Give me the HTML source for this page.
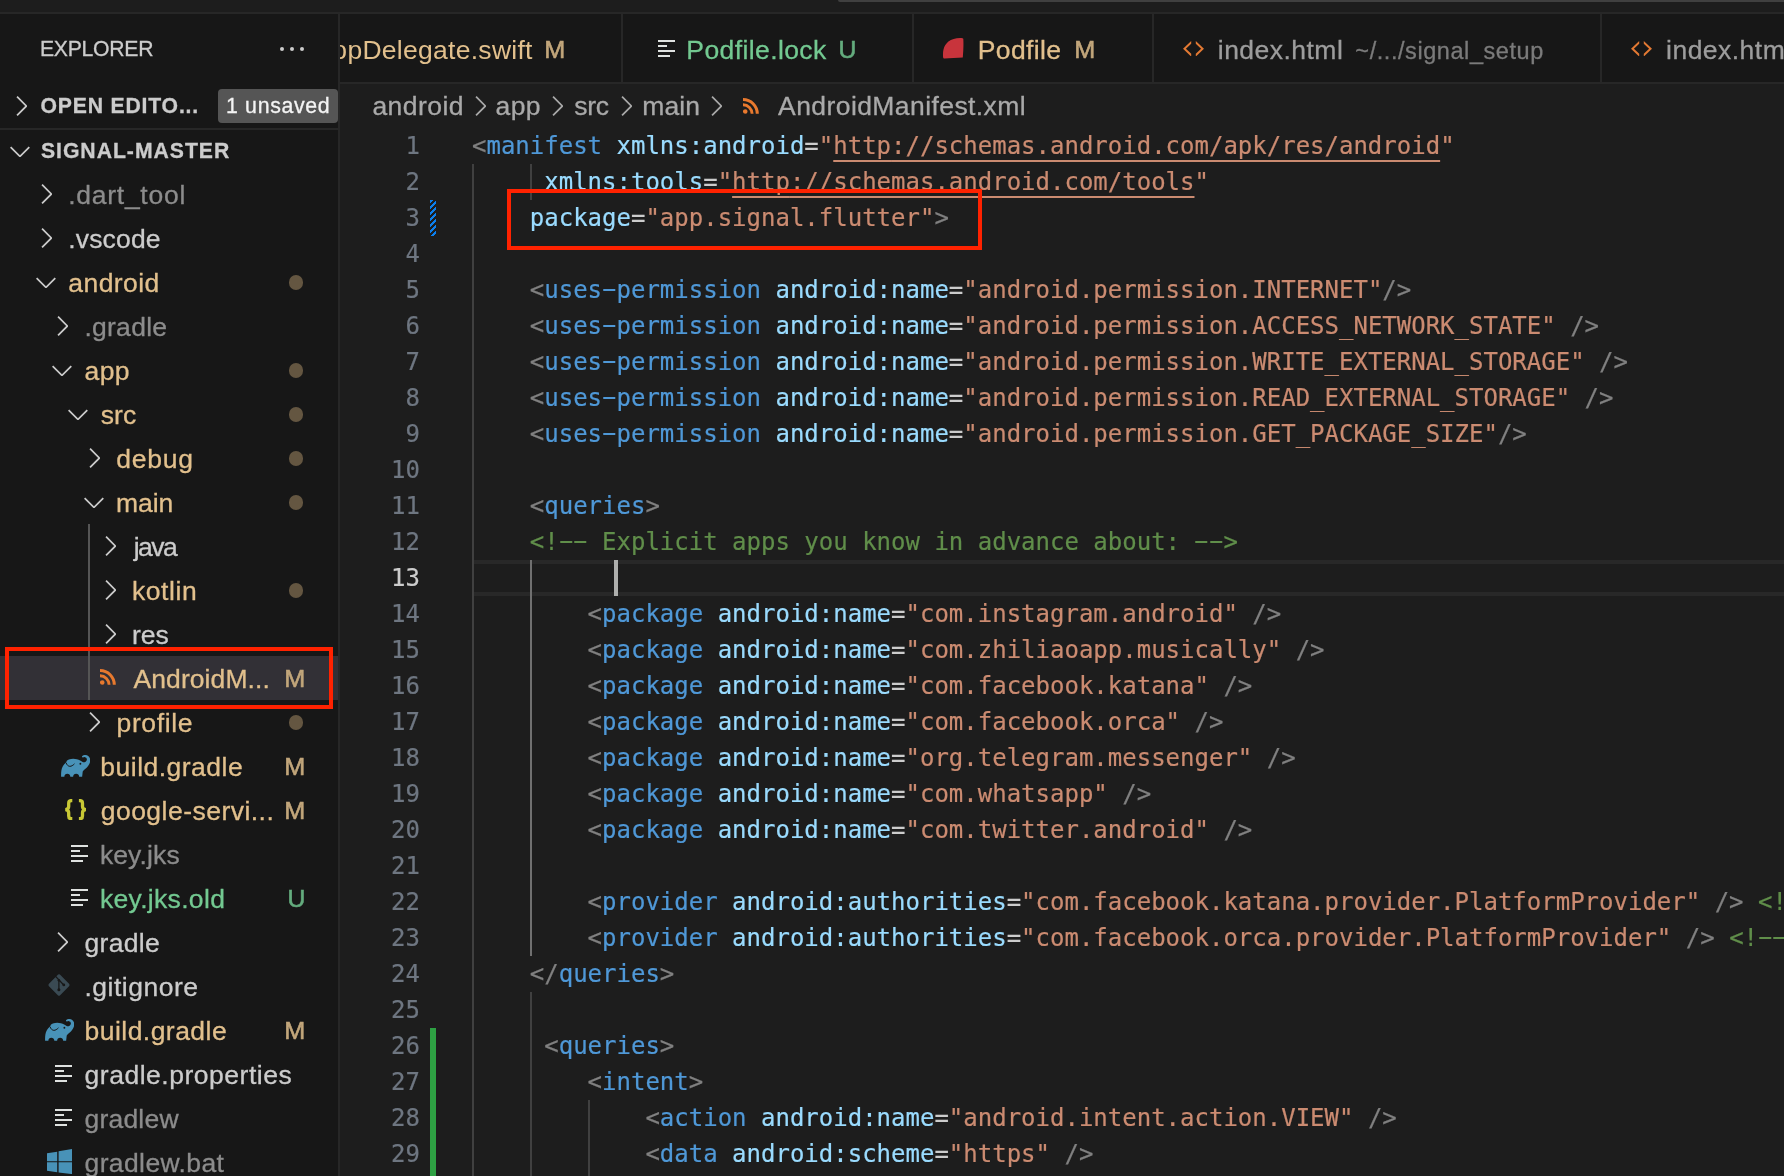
<!DOCTYPE html><html><head><meta charset="utf-8"><title>AndroidManifest.xml</title><style>html,body{margin:0;padding:0;background:#1d1d1d;}body{width:1784px;height:1176px;position:relative;overflow:hidden;}</style></head><body><div style="position:absolute;left:0px;top:0px;width:1784px;height:12px;background:#1d1d1d;"></div>
<div style="position:absolute;left:838px;top:0px;width:946px;height:2px;background:#404040;border-bottom-left-radius:3px;"></div>
<div style="position:absolute;left:0px;top:12px;width:1784px;height:2px;background:#272727;"></div>
<div style="position:absolute;left:0px;top:14px;width:338px;height:1162px;background:#171717;"></div>
<div style="position:absolute;left:338px;top:14px;width:2px;height:1162px;background:#272727;"></div>
<div style="position:absolute;left:340px;top:14px;width:1444px;height:68px;background:#171717;"></div>
<div style="position:absolute;left:340px;top:82px;width:1444px;height:2px;background:#272727;"></div>
<div style="position:absolute;left:340px;top:84px;width:1444px;height:1092px;background:#1d1d1d;"></div>
<div style="position:absolute;left:621px;top:14px;width:2px;height:68px;background:#272727;"></div>
<div style="position:absolute;left:912px;top:14px;width:2px;height:68px;background:#272727;"></div>
<div style="position:absolute;left:1152px;top:14px;width:2px;height:68px;background:#272727;"></div>
<div style="position:absolute;left:1600px;top:14px;width:2px;height:68px;background:#272727;"></div>
<div style="position:absolute;left:280.0px;top:47px;width:4.1px;height:4.1px;border-radius:50%;background:#cccccc"></div>
<div style="position:absolute;left:290.1px;top:47px;width:4.1px;height:4.1px;border-radius:50%;background:#cccccc"></div>
<div style="position:absolute;left:300.1px;top:47px;width:4.1px;height:4.1px;border-radius:50%;background:#cccccc"></div>
<svg style="position:absolute;left:4.5px;top:90px" width="32" height="32" viewBox="0 0 16 16"><path fill="#cccccc" d="M10.072 8.024L5.715 3.667l.618-.62L11 7.716v.618L6.333 13l-.618-.619 4.357-4.357z"/></svg>
<div style="position:absolute;left:218px;top:89px;width:120px;height:34px;background:#555555;border-radius:4px;"></div>
<div style="position:absolute;left:0px;top:128px;width:338px;height:2px;background:#272727;"></div>
<svg style="position:absolute;left:4px;top:134.5px" width="32" height="32" viewBox="0 0 16 16"><path fill="#cccccc" d="M7.976 10.072l4.357-4.357.62.618L8.284 11h-.618L3 6.333l.619-.618 4.357 4.357z"/></svg>
<div style="position:absolute;left:0px;top:656px;width:338px;height:44px;background:#323036;"></div>
<div style="position:absolute;left:88px;top:524px;width:2px;height:176px;background:#555555;"></div>
<svg style="position:absolute;left:30px;top:178px" width="32" height="32" viewBox="0 0 16 16"><path fill="#cccccc" d="M10.072 8.024L5.715 3.667l.618-.62L11 7.716v.618L6.333 13l-.618-.619 4.357-4.357z"/></svg>
<svg style="position:absolute;left:30px;top:222px" width="32" height="32" viewBox="0 0 16 16"><path fill="#cccccc" d="M10.072 8.024L5.715 3.667l.618-.62L11 7.716v.618L6.333 13l-.618-.619 4.357-4.357z"/></svg>
<svg style="position:absolute;left:30px;top:266px" width="32" height="32" viewBox="0 0 16 16"><path fill="#cccccc" d="M7.976 10.072l4.357-4.357.62.618L8.284 11h-.618L3 6.333l.619-.618 4.357 4.357z"/></svg>
<div style="position:absolute;left:288.5px;top:274.8px;width:14.8px;height:14.8px;border-radius:50%;background:#645641"></div>
<svg style="position:absolute;left:46px;top:310px" width="32" height="32" viewBox="0 0 16 16"><path fill="#cccccc" d="M10.072 8.024L5.715 3.667l.618-.62L11 7.716v.618L6.333 13l-.618-.619 4.357-4.357z"/></svg>
<svg style="position:absolute;left:46px;top:354px" width="32" height="32" viewBox="0 0 16 16"><path fill="#cccccc" d="M7.976 10.072l4.357-4.357.62.618L8.284 11h-.618L3 6.333l.619-.618 4.357 4.357z"/></svg>
<div style="position:absolute;left:288.5px;top:362.8px;width:14.8px;height:14.8px;border-radius:50%;background:#645641"></div>
<svg style="position:absolute;left:62px;top:398px" width="32" height="32" viewBox="0 0 16 16"><path fill="#cccccc" d="M7.976 10.072l4.357-4.357.62.618L8.284 11h-.618L3 6.333l.619-.618 4.357 4.357z"/></svg>
<div style="position:absolute;left:288.5px;top:406.8px;width:14.8px;height:14.8px;border-radius:50%;background:#645641"></div>
<svg style="position:absolute;left:78px;top:442px" width="32" height="32" viewBox="0 0 16 16"><path fill="#cccccc" d="M10.072 8.024L5.715 3.667l.618-.62L11 7.716v.618L6.333 13l-.618-.619 4.357-4.357z"/></svg>
<div style="position:absolute;left:288.5px;top:450.8px;width:14.8px;height:14.8px;border-radius:50%;background:#645641"></div>
<svg style="position:absolute;left:78px;top:486px" width="32" height="32" viewBox="0 0 16 16"><path fill="#cccccc" d="M7.976 10.072l4.357-4.357.62.618L8.284 11h-.618L3 6.333l.619-.618 4.357 4.357z"/></svg>
<div style="position:absolute;left:288.5px;top:494.8px;width:14.8px;height:14.8px;border-radius:50%;background:#645641"></div>
<svg style="position:absolute;left:94px;top:530px" width="32" height="32" viewBox="0 0 16 16"><path fill="#cccccc" d="M10.072 8.024L5.715 3.667l.618-.62L11 7.716v.618L6.333 13l-.618-.619 4.357-4.357z"/></svg>
<svg style="position:absolute;left:94px;top:574px" width="32" height="32" viewBox="0 0 16 16"><path fill="#cccccc" d="M10.072 8.024L5.715 3.667l.618-.62L11 7.716v.618L6.333 13l-.618-.619 4.357-4.357z"/></svg>
<div style="position:absolute;left:288.5px;top:582.8000000000001px;width:14.8px;height:14.8px;border-radius:50%;background:#645641"></div>
<svg style="position:absolute;left:94px;top:618px" width="32" height="32" viewBox="0 0 16 16"><path fill="#cccccc" d="M10.072 8.024L5.715 3.667l.618-.62L11 7.716v.618L6.333 13l-.618-.619 4.357-4.357z"/></svg>
<svg style="position:absolute;left:99.7px;top:669.45px" width="16" height="16" viewBox="0 0 16 16"><circle cx="2.25" cy="13.45" r="2.3" fill="#e8792e"/><path d="M0 6.75 A9.1 9.1 0 0 1 9.1 15.85" fill="none" stroke="#e8792e" stroke-width="2.9"/><path d="M0 1.55 A14.3 14.3 0 0 1 14.3 15.85" fill="none" stroke="#e8792e" stroke-width="3.05"/></svg>
<svg style="position:absolute;left:78px;top:706px" width="32" height="32" viewBox="0 0 16 16"><path fill="#cccccc" d="M10.072 8.024L5.715 3.667l.618-.62L11 7.716v.618L6.333 13l-.618-.619 4.357-4.357z"/></svg>
<div style="position:absolute;left:288.5px;top:714.8000000000001px;width:14.8px;height:14.8px;border-radius:50%;background:#645641"></div>
<svg style="position:absolute;left:60.8px;top:754.8px" width="29.5" height="22.3" viewBox="0 0 30 23" preserveAspectRatio="none"><path fill="#4892b8" d="M0.1 22.4 C0 18 0.3 14.6 1.6 12.1 C2.8 9.9 4.2 8.4 5.6 7.3 C5.3 6.2 6.4 5.3 8 4.6 C10.5 3.6 13.6 3.5 16.2 4.3 C18.6 5 20.6 6 22 7.2 C22.8 7.7 23.8 7.6 24.6 7.1 C25.7 6.4 26.4 5.4 26.3 4.4 C26.2 3 25.4 2.3 24.3 2.2 C23.5 2.1 22.8 2.3 22.3 2.7 C21.6 2.5 21.2 2 21.4 1.4 C22 0.5 23.4 0 25 0 C27 0 28.7 1.3 29.4 3.4 C30 5.4 29.8 7.2 28.8 9.2 C27.7 11.4 26 13.2 24.2 14.6 C23.2 15.4 22.4 16.2 22.1 17 L21.5 22.4 L18.5 22.4 C18.4 20.4 17.2 19.3 15.4 19.3 C13.6 19.3 12.4 20.4 12.3 22.4 L9.5 22.4 C9.4 20.4 8.2 19.3 6.4 19.3 C4.6 19.3 3.5 20.4 3.4 22.4 Z"/><path d="M5.3 8.4 C6 10.4 7.4 11.6 9 11.7 C10.6 11.7 12 10.8 13.4 9.4" fill="none" stroke="#171717" stroke-width="1" stroke-linecap="round"/><circle cx="19.7" cy="9" r="0.95" fill="#171717"/></svg>
<svg style="position:absolute;left:65px;top:798.8px" width="22" height="21.3" viewBox="0 0 22 21.4" preserveAspectRatio="none"><path transform="translate(0 0)" fill="none" stroke="#c8c835" stroke-width="3.3" d="M7.3 1.6 L6.2 1.6 C4.4 1.6 3.7 2.6 3.7 4.4 L3.7 7.6 C3.7 9.4 2.9 10.4 0.4 10.7 C2.9 11 3.7 12 3.7 13.8 L3.7 17 C3.7 18.8 4.4 19.8 6.2 19.8 L7.3 19.8"/><path transform="translate(21.2 0) scale(-1 1)" fill="none" stroke="#c8c835" stroke-width="3.3" d="M7.3 1.6 L6.2 1.6 C4.4 1.6 3.7 2.6 3.7 4.4 L3.7 7.6 C3.7 9.4 2.9 10.4 0.4 10.7 C2.9 11 3.7 12 3.7 13.8 L3.7 17 C3.7 18.8 4.4 19.8 6.2 19.8 L7.3 19.8"/></svg>
<div style="position:absolute;left:70.9px;top:845.0px;width:16.7px;height:2.2px;background:#dfe2e0;"></div>
<div style="position:absolute;left:70.9px;top:850.0px;width:9.4px;height:2.2px;background:#dfe2e0;"></div>
<div style="position:absolute;left:70.9px;top:855.0px;width:16.7px;height:2.2px;background:#dfe2e0;"></div>
<div style="position:absolute;left:70.9px;top:860.0px;width:12.3px;height:2.2px;background:#dfe2e0;"></div>
<div style="position:absolute;left:70.9px;top:889.0px;width:16.7px;height:2.2px;background:#dfe2e0;"></div>
<div style="position:absolute;left:70.9px;top:894.0px;width:9.4px;height:2.2px;background:#dfe2e0;"></div>
<div style="position:absolute;left:70.9px;top:899.0px;width:16.7px;height:2.2px;background:#dfe2e0;"></div>
<div style="position:absolute;left:70.9px;top:904.0px;width:12.3px;height:2.2px;background:#dfe2e0;"></div>
<svg style="position:absolute;left:46px;top:926px" width="32" height="32" viewBox="0 0 16 16"><path fill="#cccccc" d="M10.072 8.024L5.715 3.667l.618-.62L11 7.716v.618L6.333 13l-.618-.619 4.357-4.357z"/></svg>
<svg style="position:absolute;left:47.8px;top:974.3px" width="22" height="22" viewBox="0 0 21.6 21.9"><path fill="#3a4a53" d="M10.8 0.2 Q11.3 0.2 11.7 0.6 L21 9.9 Q21.6 10.9 21 11.9 L11.7 21.3 Q10.8 21.9 9.9 21.3 L0.6 11.9 Q0 10.9 0.6 9.9 L9.9 0.6 Q10.3 0.2 10.8 0.2 Z"/><g stroke="#171717" stroke-width="1.25" fill="none"><path d="M10.7 6.3 L10.7 15.5"/><path d="M7.2 2.1 L15.5 10.9"/></g><circle cx="10.7" cy="6.3" r="1.25" fill="#171717"/><circle cx="10.7" cy="15.6" r="1.5" fill="#171717"/><circle cx="15.6" cy="10.9" r="1.4" fill="#171717"/></svg>
<svg style="position:absolute;left:44.6px;top:1018.8px" width="29.5" height="22.3" viewBox="0 0 30 23" preserveAspectRatio="none"><path fill="#4892b8" d="M0.1 22.4 C0 18 0.3 14.6 1.6 12.1 C2.8 9.9 4.2 8.4 5.6 7.3 C5.3 6.2 6.4 5.3 8 4.6 C10.5 3.6 13.6 3.5 16.2 4.3 C18.6 5 20.6 6 22 7.2 C22.8 7.7 23.8 7.6 24.6 7.1 C25.7 6.4 26.4 5.4 26.3 4.4 C26.2 3 25.4 2.3 24.3 2.2 C23.5 2.1 22.8 2.3 22.3 2.7 C21.6 2.5 21.2 2 21.4 1.4 C22 0.5 23.4 0 25 0 C27 0 28.7 1.3 29.4 3.4 C30 5.4 29.8 7.2 28.8 9.2 C27.7 11.4 26 13.2 24.2 14.6 C23.2 15.4 22.4 16.2 22.1 17 L21.5 22.4 L18.5 22.4 C18.4 20.4 17.2 19.3 15.4 19.3 C13.6 19.3 12.4 20.4 12.3 22.4 L9.5 22.4 C9.4 20.4 8.2 19.3 6.4 19.3 C4.6 19.3 3.5 20.4 3.4 22.4 Z"/><path d="M5.3 8.4 C6 10.4 7.4 11.6 9 11.7 C10.6 11.7 12 10.8 13.4 9.4" fill="none" stroke="#171717" stroke-width="1" stroke-linecap="round"/><circle cx="19.7" cy="9" r="0.95" fill="#171717"/></svg>
<div style="position:absolute;left:54.9px;top:1065.0px;width:16.7px;height:2.2px;background:#dfe2e0;"></div>
<div style="position:absolute;left:54.9px;top:1070.0px;width:9.4px;height:2.2px;background:#dfe2e0;"></div>
<div style="position:absolute;left:54.9px;top:1075.0px;width:16.7px;height:2.2px;background:#dfe2e0;"></div>
<div style="position:absolute;left:54.9px;top:1080.0px;width:12.3px;height:2.2px;background:#dfe2e0;"></div>
<div style="position:absolute;left:54.9px;top:1109.0px;width:16.7px;height:2.2px;background:#dfe2e0;"></div>
<div style="position:absolute;left:54.9px;top:1114.0px;width:9.4px;height:2.2px;background:#dfe2e0;"></div>
<div style="position:absolute;left:54.9px;top:1119.0px;width:16.7px;height:2.2px;background:#dfe2e0;"></div>
<div style="position:absolute;left:54.9px;top:1124.0px;width:12.3px;height:2.2px;background:#dfe2e0;"></div>
<svg style="position:absolute;left:47px;top:1148.7px" width="25.2" height="25.2" viewBox="0 0 25.2 25.2"><path fill="#4892b8" d="M0 4.25 L10.2 2.75 L10.2 12.15 L0 12.15 Z M11.6 2.25 L25.2 0 L25.2 12.15 L11.6 12.15 Z M0 13.25 L10.2 13.25 L10.2 23.15 L0 21.65 Z M11.6 13.25 L25.2 13.25 L25.2 25.15 L11.6 23.45 Z"/></svg>
<div style="position:absolute;left:658px;top:40.0px;width:16.7px;height:2.2px;background:#dfe2e0;"></div>
<div style="position:absolute;left:658px;top:45.0px;width:9.4px;height:2.2px;background:#dfe2e0;"></div>
<div style="position:absolute;left:658px;top:50.0px;width:16.7px;height:2.2px;background:#dfe2e0;"></div>
<div style="position:absolute;left:658px;top:55.0px;width:12.3px;height:2.2px;background:#dfe2e0;"></div>
<svg style="position:absolute;left:943.1px;top:38px" width="20.8" height="20.8" viewBox="0 0 20.8 20.8"><path fill="#c8343c" d="M17 0 C18.6 -0.1 19.8 0.1 20.3 0.7 C20.7 6 20.3 14 19.8 19.6 C14 19.7 7 20.2 1.6 20.5 C0.4 20.4 0 19.6 0 18.4 C0 15.5 0 13.5 0.5 11.5 C1.3 8.3 3 5.6 5.4 3.6 C8.4 1.2 12.5 0.2 17 0 Z"/></svg>
<svg style="position:absolute;left:1182.9px;top:40.6px" width="21" height="15.6" viewBox="0 0 21 15.6"><path fill="#e37933" d="M0 7.8 L8.2 0 L8.2 2.8 L2.9 7.8 L8.2 12.8 L8.2 15.6 Z M21 7.8 L12.8 0 L12.8 2.8 L18.1 7.8 L12.8 12.8 L12.8 15.6 Z"/></svg>
<svg style="position:absolute;left:1631.3px;top:40.6px" width="21" height="15.6" viewBox="0 0 21 15.6"><path fill="#e37933" d="M0 7.8 L8.2 0 L8.2 2.8 L2.9 7.8 L8.2 12.8 L8.2 15.6 Z M21 7.8 L12.8 0 L12.8 2.8 L18.1 7.8 L12.8 12.8 L12.8 15.6 Z"/></svg>
<svg style="position:absolute;left:463.77px;top:90.3px" width="32" height="32" viewBox="0 0 16 16"><path fill="#a9a9a9" d="M10.072 8.024L5.715 3.667l.618-.62L11 7.716v.618L6.333 13l-.618-.619 4.357-4.357z"/></svg>
<svg style="position:absolute;left:541.1700000000001px;top:90.3px" width="32" height="32" viewBox="0 0 16 16"><path fill="#a9a9a9" d="M10.072 8.024L5.715 3.667l.618-.62L11 7.716v.618L6.333 13l-.618-.619 4.357-4.357z"/></svg>
<svg style="position:absolute;left:610.37px;top:90.3px" width="32" height="32" viewBox="0 0 16 16"><path fill="#a9a9a9" d="M10.072 8.024L5.715 3.667l.618-.62L11 7.716v.618L6.333 13l-.618-.619 4.357-4.357z"/></svg>
<svg style="position:absolute;left:700.2700000000001px;top:90.3px" width="32" height="32" viewBox="0 0 16 16"><path fill="#a9a9a9" d="M10.072 8.024L5.715 3.667l.618-.62L11 7.716v.618L6.333 13l-.618-.619 4.357-4.357z"/></svg>
<svg style="position:absolute;left:743.4px;top:97.9px" width="16" height="16" viewBox="0 0 16 16"><circle cx="2.25" cy="13.45" r="2.3" fill="#e8792e"/><path d="M0 6.75 A9.1 9.1 0 0 1 9.1 15.85" fill="none" stroke="#e8792e" stroke-width="2.9"/><path d="M0 1.55 A14.3 14.3 0 0 1 14.3 15.85" fill="none" stroke="#e8792e" stroke-width="3.05"/></svg>
<div style="position:absolute;left:474px;top:560px;width:1310px;height:4px;background:#282828;"></div>
<div style="position:absolute;left:474px;top:592px;width:1310px;height:4px;background:#282828;"></div>
<div style="position:absolute;left:472px;top:164px;width:2px;height:1012px;background:#404040;"></div>
<div style="position:absolute;left:530px;top:164px;width:2px;height:36px;background:#404040;"></div>
<div style="position:absolute;left:530px;top:560px;width:2px;height:396px;background:#707070;"></div>
<div style="position:absolute;left:530px;top:992px;width:2px;height:184px;background:#404040;"></div>
<div style="position:absolute;left:588px;top:1100px;width:2px;height:76px;background:#404040;"></div>
<div style="position:absolute;left:614px;top:560px;width:4px;height:36px;background:#aeafad;"></div>
<div style="position:absolute;left:430px;top:200px;width:6.2px;height:36px;background:repeating-linear-gradient(135deg,#0c80ee 0,#0c80ee 2.2px,transparent 2.2px,transparent 4.243px)"></div>
<div style="position:absolute;left:430px;top:1028px;width:6.2px;height:148px;background:#2ea043;"></div><div style="position:absolute;left:0;top:0;width:1784px;height:1176px;will-change:transform"><div id="explorer" style="position:absolute;left:39.94px;top:27.4px;height:44px;line-height:44px;font-family:'Liberation Sans', sans-serif;font-size:21.2px;font-weight:400;color:#cccccc;letter-spacing:-0.254px;white-space:pre;-webkit-text-stroke:0.3px;">EXPLORER</div>
<div id="openeditors" style="position:absolute;left:40.44px;top:84.4px;height:44px;line-height:44px;font-family:'Liberation Sans', sans-serif;font-size:21.2px;font-weight:700;color:#cccccc;letter-spacing:0.817px;white-space:pre;-webkit-text-stroke:0.3px;">OPEN EDITO...</div>
<div id="unsaved" style="position:absolute;left:226.02px;top:89px;height:34px;line-height:34px;font-family:'Liberation Sans', sans-serif;font-size:21.3px;font-weight:400;color:#f4f4f4;letter-spacing:0.669px;white-space:pre;-webkit-text-stroke:0.3px;">1 unsaved</div>
<div id="signal" style="position:absolute;left:40.91px;top:129.4px;height:44px;line-height:44px;font-family:'Liberation Sans', sans-serif;font-size:21.2px;font-weight:700;color:#cccccc;letter-spacing:0.984px;white-space:pre;-webkit-text-stroke:0.3px;">SIGNAL-MASTER</div>
<div id="row0" style="position:absolute;left:68.19px;top:173px;height:44px;line-height:44px;font-family:'Liberation Sans', sans-serif;font-size:26.5px;font-weight:400;color:#8c8c8c;letter-spacing:0.737px;white-space:pre;-webkit-text-stroke:0.3px;">.dart_tool</div>
<div id="row1" style="position:absolute;left:68.19px;top:217px;height:44px;line-height:44px;font-family:'Liberation Sans', sans-serif;font-size:26.5px;font-weight:400;color:#cccccc;letter-spacing:0.175px;white-space:pre;-webkit-text-stroke:0.3px;">.vscode</div>
<div id="row2" style="position:absolute;left:68.32px;top:261px;height:44px;line-height:44px;font-family:'Liberation Sans', sans-serif;font-size:26.5px;font-weight:400;color:#e2c08d;letter-spacing:0.420px;white-space:pre;-webkit-text-stroke:0.3px;">android</div>
<div id="row3" style="position:absolute;left:84.39px;top:305px;height:44px;line-height:44px;font-family:'Liberation Sans', sans-serif;font-size:26.5px;font-weight:400;color:#8c8c8c;letter-spacing:0.272px;white-space:pre;-webkit-text-stroke:0.3px;">.gradle</div>
<div id="row4" style="position:absolute;left:84.52px;top:349px;height:44px;line-height:44px;font-family:'Liberation Sans', sans-serif;font-size:26.5px;font-weight:400;color:#e2c08d;letter-spacing:0.410px;white-space:pre;-webkit-text-stroke:0.3px;">app</div>
<div id="row5" style="position:absolute;left:100.71px;top:393px;height:44px;line-height:44px;font-family:'Liberation Sans', sans-serif;font-size:26.5px;font-weight:400;color:#e2c08d;letter-spacing:0.130px;white-space:pre;-webkit-text-stroke:0.3px;">src</div>
<div id="row6" style="position:absolute;left:116.34px;top:437px;height:44px;line-height:44px;font-family:'Liberation Sans', sans-serif;font-size:26.5px;font-weight:400;color:#e2c08d;letter-spacing:0.727px;white-space:pre;-webkit-text-stroke:0.3px;">debug</div>
<div id="row7" style="position:absolute;left:116.07px;top:481px;height:44px;line-height:44px;font-family:'Liberation Sans', sans-serif;font-size:26.5px;font-weight:400;color:#e2c08d;letter-spacing:-0.117px;white-space:pre;-webkit-text-stroke:0.3px;">main</div>
<div id="row8" style="position:absolute;left:133.64px;top:525px;height:44px;line-height:44px;font-family:'Liberation Sans', sans-serif;font-size:26.5px;font-weight:400;color:#cccccc;letter-spacing:-1.503px;white-space:pre;-webkit-text-stroke:0.3px;">java</div>
<div id="row9" style="position:absolute;left:131.88px;top:569px;height:44px;line-height:44px;font-family:'Liberation Sans', sans-serif;font-size:26.5px;font-weight:400;color:#e2c08d;letter-spacing:0.598px;white-space:pre;-webkit-text-stroke:0.3px;">kotlin</div>
<div id="row10" style="position:absolute;left:131.88px;top:613px;height:44px;line-height:44px;font-family:'Liberation Sans', sans-serif;font-size:26.5px;font-weight:400;color:#cccccc;letter-spacing:0.040px;white-space:pre;-webkit-text-stroke:0.3px;">res</div>
<div id="row11" style="position:absolute;left:133.50px;top:657px;height:44px;line-height:44px;font-family:'Liberation Sans', sans-serif;font-size:26.5px;font-weight:400;color:#e2c08d;letter-spacing:0.082px;white-space:pre;-webkit-text-stroke:0.3px;">AndroidM...</div>
<div id="st11" style="position:absolute;left:285.45px;top:657px;height:44px;line-height:44px;font-family:'Liberation Sans', sans-serif;font-size:23.6px;font-weight:400;color:#c2a67b;letter-spacing:0.000px;white-space:pre;-webkit-text-stroke:0.3px;-webkit-text-stroke:0.55px;transform:scaleX(1.07);">M</div>
<div id="row12" style="position:absolute;left:116.54px;top:701px;height:44px;line-height:44px;font-family:'Liberation Sans', sans-serif;font-size:26.5px;font-weight:400;color:#e2c08d;letter-spacing:0.617px;white-space:pre;-webkit-text-stroke:0.3px;">profile</div>
<div id="row13" style="position:absolute;left:100.34px;top:745px;height:44px;line-height:44px;font-family:'Liberation Sans', sans-serif;font-size:26.5px;font-weight:400;color:#e2c08d;letter-spacing:0.480px;white-space:pre;-webkit-text-stroke:0.3px;">build.gradle</div>
<div id="st13" style="position:absolute;left:285.45px;top:745px;height:44px;line-height:44px;font-family:'Liberation Sans', sans-serif;font-size:23.6px;font-weight:400;color:#c2a67b;letter-spacing:0.000px;white-space:pre;-webkit-text-stroke:0.3px;-webkit-text-stroke:0.55px;transform:scaleX(1.07);">M</div>
<div id="row14" style="position:absolute;left:100.74px;top:789px;height:44px;line-height:44px;font-family:'Liberation Sans', sans-serif;font-size:26.5px;font-weight:400;color:#e2c08d;letter-spacing:0.474px;white-space:pre;-webkit-text-stroke:0.3px;">google-servi...</div>
<div id="st14" style="position:absolute;left:285.45px;top:789px;height:44px;line-height:44px;font-family:'Liberation Sans', sans-serif;font-size:23.6px;font-weight:400;color:#c2a67b;letter-spacing:0.000px;white-space:pre;-webkit-text-stroke:0.3px;-webkit-text-stroke:0.55px;transform:scaleX(1.07);">M</div>
<div id="row15" style="position:absolute;left:99.88px;top:833px;height:44px;line-height:44px;font-family:'Liberation Sans', sans-serif;font-size:26.5px;font-weight:400;color:#8c8c8c;letter-spacing:0.130px;white-space:pre;-webkit-text-stroke:0.3px;">key.jks</div>
<div id="row16" style="position:absolute;left:99.88px;top:877px;height:44px;line-height:44px;font-family:'Liberation Sans', sans-serif;font-size:26.5px;font-weight:400;color:#73c991;letter-spacing:0.327px;white-space:pre;-webkit-text-stroke:0.3px;">key.jks.old</div>
<div id="st16" style="position:absolute;left:288.28px;top:877px;height:44px;line-height:44px;font-family:'Liberation Sans', sans-serif;font-size:23.6px;font-weight:400;color:#64ac7e;letter-spacing:0.000px;white-space:pre;-webkit-text-stroke:0.3px;-webkit-text-stroke:0.55px;transform:scaleX(1.05);">U</div>
<div id="row17" style="position:absolute;left:84.54px;top:921px;height:44px;line-height:44px;font-family:'Liberation Sans', sans-serif;font-size:26.5px;font-weight:400;color:#cccccc;letter-spacing:0.304px;white-space:pre;-webkit-text-stroke:0.3px;">gradle</div>
<div id="row18" style="position:absolute;left:84.39px;top:965px;height:44px;line-height:44px;font-family:'Liberation Sans', sans-serif;font-size:26.5px;font-weight:400;color:#cccccc;letter-spacing:0.514px;white-space:pre;-webkit-text-stroke:0.3px;">.gitignore</div>
<div id="row19" style="position:absolute;left:84.54px;top:1009px;height:44px;line-height:44px;font-family:'Liberation Sans', sans-serif;font-size:26.5px;font-weight:400;color:#e2c08d;letter-spacing:0.462px;white-space:pre;-webkit-text-stroke:0.3px;">build.gradle</div>
<div id="st19" style="position:absolute;left:285.45px;top:1009px;height:44px;line-height:44px;font-family:'Liberation Sans', sans-serif;font-size:23.6px;font-weight:400;color:#c2a67b;letter-spacing:0.000px;white-space:pre;-webkit-text-stroke:0.3px;-webkit-text-stroke:0.55px;transform:scaleX(1.07);">M</div>
<div id="row20" style="position:absolute;left:84.54px;top:1053px;height:44px;line-height:44px;font-family:'Liberation Sans', sans-serif;font-size:26.5px;font-weight:400;color:#cccccc;letter-spacing:0.521px;white-space:pre;-webkit-text-stroke:0.3px;">gradle.properties</div>
<div id="row21" style="position:absolute;left:84.54px;top:1097px;height:44px;line-height:44px;font-family:'Liberation Sans', sans-serif;font-size:26.5px;font-weight:400;color:#8c8c8c;letter-spacing:0.197px;white-space:pre;-webkit-text-stroke:0.3px;">gradlew</div>
<div id="row22" style="position:absolute;left:84.54px;top:1141px;height:44px;line-height:44px;font-family:'Liberation Sans', sans-serif;font-size:26.5px;font-weight:400;color:#8c8c8c;letter-spacing:0.385px;white-space:pre;-webkit-text-stroke:0.3px;">gradlew.bat</div>
<div style="position:absolute;left:5px;top:647.4px;width:328.1px;height:61.2px;box-sizing:border-box;border:4.2px solid #ff2200"></div>
<div style="position:absolute;left:340px;top:13px;width:281px;height:69px;overflow:hidden">
<div id="tab1" style="position:absolute;left:-25.60px;top:2px;height:70px;line-height:70px;font-family:'Liberation Sans', sans-serif;font-size:26.5px;color:#e2c08d;letter-spacing:0.28px;white-space:pre">AppDelegate.swift</div></div>
<div id="tab1m" style="position:absolute;left:544.60px;top:15px;height:70px;line-height:70px;font-family:'Liberation Sans', sans-serif;font-size:23.6px;font-weight:400;color:#c2a67b;letter-spacing:0.000px;white-space:pre;-webkit-text-stroke:0.3px;-webkit-text-stroke:0.55px;transform:scaleX(1.07);">M</div>
<div id="tab2" style="position:absolute;left:686.35px;top:15px;height:70px;line-height:70px;font-family:'Liberation Sans', sans-serif;font-size:26.5px;font-weight:400;color:#73c991;letter-spacing:0.398px;white-space:pre;-webkit-text-stroke:0.3px;">Podfile.lock</div>
<div id="tab2u" style="position:absolute;left:838.94px;top:15px;height:70px;line-height:70px;font-family:'Liberation Sans', sans-serif;font-size:23.6px;font-weight:400;color:#64ac7e;letter-spacing:0.000px;white-space:pre;-webkit-text-stroke:0.3px;-webkit-text-stroke:0.55px;transform:scaleX(1.05);">U</div>
<div id="tab3" style="position:absolute;left:977.75px;top:15px;height:70px;line-height:70px;font-family:'Liberation Sans', sans-serif;font-size:26.5px;font-weight:400;color:#e2c08d;letter-spacing:0.378px;white-space:pre;-webkit-text-stroke:0.3px;">Podfile</div>
<div id="tab3m" style="position:absolute;left:1075.05px;top:15px;height:70px;line-height:70px;font-family:'Liberation Sans', sans-serif;font-size:23.6px;font-weight:400;color:#c2a67b;letter-spacing:0.000px;white-space:pre;-webkit-text-stroke:0.3px;-webkit-text-stroke:0.55px;transform:scaleX(1.07);">M</div>
<div id="tab4" style="position:absolute;left:1217.80px;top:15px;height:70px;line-height:70px;font-family:'Liberation Sans', sans-serif;font-size:26.5px;font-weight:400;color:#9d9d9d;letter-spacing:0.467px;white-space:pre;-webkit-text-stroke:0.3px;">index.html</div>
<div id="tab4d" style="position:absolute;left:1355.36px;top:16px;height:70px;line-height:70px;font-family:'Liberation Sans', sans-serif;font-size:23.5px;font-weight:400;color:#7b7b7b;letter-spacing:0.564px;white-space:pre;-webkit-text-stroke:0.3px;">~/.../signal_setup</div>
<div id="tab5" style="position:absolute;left:1666.10px;top:15px;height:70px;line-height:70px;font-family:'Liberation Sans', sans-serif;font-size:26.5px;font-weight:400;color:#9d9d9d;letter-spacing:0.467px;white-space:pre;-webkit-text-stroke:0.3px;">index.html</div>
<div id="bc1" style="position:absolute;left:372.42px;top:84px;height:44px;line-height:44px;font-family:'Liberation Sans', sans-serif;font-size:26.5px;font-weight:400;color:#a9a9a9;letter-spacing:0.453px;white-space:pre;-webkit-text-stroke:0.3px;">android</div>
<div id="bc2" style="position:absolute;left:495.52px;top:84px;height:44px;line-height:44px;font-family:'Liberation Sans', sans-serif;font-size:26.5px;font-weight:400;color:#a9a9a9;letter-spacing:0.410px;white-space:pre;-webkit-text-stroke:0.3px;">app</div>
<div id="bc3" style="position:absolute;left:574.21px;top:84px;height:44px;line-height:44px;font-family:'Liberation Sans', sans-serif;font-size:26.5px;font-weight:400;color:#a9a9a9;letter-spacing:-0.270px;white-space:pre;-webkit-text-stroke:0.3px;">src</div>
<div id="bc4" style="position:absolute;left:642.37px;top:84px;height:44px;line-height:44px;font-family:'Liberation Sans', sans-serif;font-size:26.5px;font-weight:400;color:#a9a9a9;letter-spacing:0.050px;white-space:pre;-webkit-text-stroke:0.3px;">main</div>
<div id="bc5" style="position:absolute;left:778.10px;top:84px;height:44px;line-height:44px;font-family:'Liberation Sans', sans-serif;font-size:26.5px;font-weight:400;color:#a9a9a9;letter-spacing:0.416px;white-space:pre;-webkit-text-stroke:0.3px;">AndroidManifest.xml</div>
<div style="position:absolute;left:0;top:0;width:1784px;height:1176px;overflow:hidden;font-family:'DejaVu Sans Mono', 'Liberation Mono', monospace;font-size:24px;line-height:36px;white-space:pre;-webkit-text-stroke:0.2px">
<div style="position:absolute;left:340px;top:128px;width:79.9px;text-align:right;color:#6e7681">1</div>
<div style="position:absolute;left:472.0px;top:128px"><span style="color:#808080">&lt;</span><span style="color:#4f98d7">manifest</span><span style="color:#cccccc"> </span><span style="color:#9adbfe">xmlns:android</span><span style="color:#cccccc">=</span><span style="color:#cb8b71">&quot;</span><span style="color:#cb8b71;text-decoration:underline;text-underline-offset:6px;text-decoration-thickness:2px;text-decoration-skip-ink:none">http</span><span style="color:#cb8b71;text-decoration:underline;text-underline-offset:6px;text-decoration-thickness:2px;text-decoration-skip-ink:none">://schemas.android.com/apk/res/android</span><span style="color:#cb8b71">&quot;</span></div>
<div style="position:absolute;left:340px;top:164px;width:79.9px;text-align:right;color:#6e7681">2</div>
<div style="position:absolute;left:472.0px;top:164px"><span style="color:#cccccc">     </span><span style="color:#9adbfe">xmlns:tools</span><span style="color:#cccccc">=</span><span style="color:#cb8b71">&quot;</span><span style="color:#cb8b71;text-decoration:underline;text-underline-offset:6px;text-decoration-thickness:2px;text-decoration-skip-ink:none">http</span><span style="color:#cb8b71;text-decoration:underline;text-underline-offset:6px;text-decoration-thickness:2px;text-decoration-skip-ink:none">://schemas.android.com/tools</span><span style="color:#cb8b71">&quot;</span></div>
<div style="position:absolute;left:340px;top:200px;width:79.9px;text-align:right;color:#6e7681">3</div>
<div style="position:absolute;left:472.0px;top:200px"><span style="color:#cccccc">    </span><span style="color:#9adbfe">package</span><span style="color:#cccccc">=</span><span style="color:#cb8b71">&quot;app.signal.flutter&quot;</span><span style="color:#808080">&gt;</span></div>
<div style="position:absolute;left:340px;top:236px;width:79.9px;text-align:right;color:#6e7681">4</div>
<div style="position:absolute;left:340px;top:272px;width:79.9px;text-align:right;color:#6e7681">5</div>
<div style="position:absolute;left:472.0px;top:272px"><span style="color:#cccccc">    </span><span style="color:#808080">&lt;</span><span style="color:#4f98d7">uses<span style="display:inline-block;transform:translateY(-0.7px) scaleX(1.9)">-</span>permission</span><span style="color:#cccccc"> </span><span style="color:#9adbfe">android:name</span><span style="color:#cccccc">=</span><span style="color:#cb8b71">&quot;android.permission.INTERNET&quot;</span><span style="color:#808080">/&gt;</span></div>
<div style="position:absolute;left:340px;top:308px;width:79.9px;text-align:right;color:#6e7681">6</div>
<div style="position:absolute;left:472.0px;top:308px"><span style="color:#cccccc">    </span><span style="color:#808080">&lt;</span><span style="color:#4f98d7">uses<span style="display:inline-block;transform:translateY(-0.7px) scaleX(1.9)">-</span>permission</span><span style="color:#cccccc"> </span><span style="color:#9adbfe">android:name</span><span style="color:#cccccc">=</span><span style="color:#cb8b71">&quot;android.permission.ACCESS_NETWORK_STATE&quot;</span><span style="color:#808080"> /&gt;</span></div>
<div style="position:absolute;left:340px;top:344px;width:79.9px;text-align:right;color:#6e7681">7</div>
<div style="position:absolute;left:472.0px;top:344px"><span style="color:#cccccc">    </span><span style="color:#808080">&lt;</span><span style="color:#4f98d7">uses<span style="display:inline-block;transform:translateY(-0.7px) scaleX(1.9)">-</span>permission</span><span style="color:#cccccc"> </span><span style="color:#9adbfe">android:name</span><span style="color:#cccccc">=</span><span style="color:#cb8b71">&quot;android.permission.WRITE_EXTERNAL_STORAGE&quot;</span><span style="color:#808080"> /&gt;</span></div>
<div style="position:absolute;left:340px;top:380px;width:79.9px;text-align:right;color:#6e7681">8</div>
<div style="position:absolute;left:472.0px;top:380px"><span style="color:#cccccc">    </span><span style="color:#808080">&lt;</span><span style="color:#4f98d7">uses<span style="display:inline-block;transform:translateY(-0.7px) scaleX(1.9)">-</span>permission</span><span style="color:#cccccc"> </span><span style="color:#9adbfe">android:name</span><span style="color:#cccccc">=</span><span style="color:#cb8b71">&quot;android.permission.READ_EXTERNAL_STORAGE&quot;</span><span style="color:#808080"> /&gt;</span></div>
<div style="position:absolute;left:340px;top:416px;width:79.9px;text-align:right;color:#6e7681">9</div>
<div style="position:absolute;left:472.0px;top:416px"><span style="color:#cccccc">    </span><span style="color:#808080">&lt;</span><span style="color:#4f98d7">uses<span style="display:inline-block;transform:translateY(-0.7px) scaleX(1.9)">-</span>permission</span><span style="color:#cccccc"> </span><span style="color:#9adbfe">android:name</span><span style="color:#cccccc">=</span><span style="color:#cb8b71">&quot;android.permission.GET_PACKAGE_SIZE&quot;</span><span style="color:#808080">/&gt;</span></div>
<div style="position:absolute;left:340px;top:452px;width:79.9px;text-align:right;color:#6e7681">10</div>
<div style="position:absolute;left:340px;top:488px;width:79.9px;text-align:right;color:#6e7681">11</div>
<div style="position:absolute;left:472.0px;top:488px"><span style="color:#cccccc">    </span><span style="color:#808080">&lt;</span><span style="color:#4f98d7">queries</span><span style="color:#808080">&gt;</span></div>
<div style="position:absolute;left:340px;top:524px;width:79.9px;text-align:right;color:#6e7681">12</div>
<div style="position:absolute;left:472.0px;top:524px"><span style="color:#cccccc">    </span><span style="color:#608e4a">&lt;!<span style="display:inline-block;transform:translateY(-0.7px) scaleX(1.9)">-</span><span style="display:inline-block;transform:translateY(-0.7px) scaleX(1.9)">-</span> Explicit apps you know in advance about: <span style="display:inline-block;transform:translateY(-0.7px) scaleX(1.9)">-</span><span style="display:inline-block;transform:translateY(-0.7px) scaleX(1.9)">-</span>&gt;</span></div>
<div style="position:absolute;left:340px;top:560px;width:79.9px;text-align:right;color:#cccccc">13</div>
<div style="position:absolute;left:340px;top:596px;width:79.9px;text-align:right;color:#6e7681">14</div>
<div style="position:absolute;left:472.0px;top:596px"><span style="color:#cccccc">        </span><span style="color:#808080">&lt;</span><span style="color:#4f98d7">package</span><span style="color:#cccccc"> </span><span style="color:#9adbfe">android:name</span><span style="color:#cccccc">=</span><span style="color:#cb8b71">&quot;com.instagram.android&quot;</span><span style="color:#cccccc"> </span><span style="color:#808080">/&gt;</span></div>
<div style="position:absolute;left:340px;top:632px;width:79.9px;text-align:right;color:#6e7681">15</div>
<div style="position:absolute;left:472.0px;top:632px"><span style="color:#cccccc">        </span><span style="color:#808080">&lt;</span><span style="color:#4f98d7">package</span><span style="color:#cccccc"> </span><span style="color:#9adbfe">android:name</span><span style="color:#cccccc">=</span><span style="color:#cb8b71">&quot;com.zhiliaoapp.musically&quot;</span><span style="color:#cccccc"> </span><span style="color:#808080">/&gt;</span></div>
<div style="position:absolute;left:340px;top:668px;width:79.9px;text-align:right;color:#6e7681">16</div>
<div style="position:absolute;left:472.0px;top:668px"><span style="color:#cccccc">        </span><span style="color:#808080">&lt;</span><span style="color:#4f98d7">package</span><span style="color:#cccccc"> </span><span style="color:#9adbfe">android:name</span><span style="color:#cccccc">=</span><span style="color:#cb8b71">&quot;com.facebook.katana&quot;</span><span style="color:#cccccc"> </span><span style="color:#808080">/&gt;</span></div>
<div style="position:absolute;left:340px;top:704px;width:79.9px;text-align:right;color:#6e7681">17</div>
<div style="position:absolute;left:472.0px;top:704px"><span style="color:#cccccc">        </span><span style="color:#808080">&lt;</span><span style="color:#4f98d7">package</span><span style="color:#cccccc"> </span><span style="color:#9adbfe">android:name</span><span style="color:#cccccc">=</span><span style="color:#cb8b71">&quot;com.facebook.orca&quot;</span><span style="color:#cccccc"> </span><span style="color:#808080">/&gt;</span></div>
<div style="position:absolute;left:340px;top:740px;width:79.9px;text-align:right;color:#6e7681">18</div>
<div style="position:absolute;left:472.0px;top:740px"><span style="color:#cccccc">        </span><span style="color:#808080">&lt;</span><span style="color:#4f98d7">package</span><span style="color:#cccccc"> </span><span style="color:#9adbfe">android:name</span><span style="color:#cccccc">=</span><span style="color:#cb8b71">&quot;org.telegram.messenger&quot;</span><span style="color:#cccccc"> </span><span style="color:#808080">/&gt;</span></div>
<div style="position:absolute;left:340px;top:776px;width:79.9px;text-align:right;color:#6e7681">19</div>
<div style="position:absolute;left:472.0px;top:776px"><span style="color:#cccccc">        </span><span style="color:#808080">&lt;</span><span style="color:#4f98d7">package</span><span style="color:#cccccc"> </span><span style="color:#9adbfe">android:name</span><span style="color:#cccccc">=</span><span style="color:#cb8b71">&quot;com.whatsapp&quot;</span><span style="color:#cccccc"> </span><span style="color:#808080">/&gt;</span></div>
<div style="position:absolute;left:340px;top:812px;width:79.9px;text-align:right;color:#6e7681">20</div>
<div style="position:absolute;left:472.0px;top:812px"><span style="color:#cccccc">        </span><span style="color:#808080">&lt;</span><span style="color:#4f98d7">package</span><span style="color:#cccccc"> </span><span style="color:#9adbfe">android:name</span><span style="color:#cccccc">=</span><span style="color:#cb8b71">&quot;com.twitter.android&quot;</span><span style="color:#cccccc"> </span><span style="color:#808080">/&gt;</span></div>
<div style="position:absolute;left:340px;top:848px;width:79.9px;text-align:right;color:#6e7681">21</div>
<div style="position:absolute;left:340px;top:884px;width:79.9px;text-align:right;color:#6e7681">22</div>
<div style="position:absolute;left:472.0px;top:884px"><span style="color:#cccccc">        </span><span style="color:#808080">&lt;</span><span style="color:#4f98d7">provider</span><span style="color:#cccccc"> </span><span style="color:#9adbfe">android:authorities</span><span style="color:#cccccc">=</span><span style="color:#cb8b71">&quot;com.facebook.katana.provider.PlatformProvider&quot;</span><span style="color:#cccccc"> </span><span style="color:#808080">/&gt;</span><span style="color:#cccccc"> </span><span style="color:#608e4a">&lt;!</span></div>
<div style="position:absolute;left:340px;top:920px;width:79.9px;text-align:right;color:#6e7681">23</div>
<div style="position:absolute;left:472.0px;top:920px"><span style="color:#cccccc">        </span><span style="color:#808080">&lt;</span><span style="color:#4f98d7">provider</span><span style="color:#cccccc"> </span><span style="color:#9adbfe">android:authorities</span><span style="color:#cccccc">=</span><span style="color:#cb8b71">&quot;com.facebook.orca.provider.PlatformProvider&quot;</span><span style="color:#cccccc"> </span><span style="color:#808080">/&gt;</span><span style="color:#cccccc"> </span><span style="color:#608e4a">&lt;!<span style="display:inline-block;transform:translateY(-0.7px) scaleX(1.9)">-</span><span style="display:inline-block;transform:translateY(-0.7px) scaleX(1.9)">-</span></span></div>
<div style="position:absolute;left:340px;top:956px;width:79.9px;text-align:right;color:#6e7681">24</div>
<div style="position:absolute;left:472.0px;top:956px"><span style="color:#cccccc">    </span><span style="color:#808080">&lt;/</span><span style="color:#4f98d7">queries</span><span style="color:#808080">&gt;</span></div>
<div style="position:absolute;left:340px;top:992px;width:79.9px;text-align:right;color:#6e7681">25</div>
<div style="position:absolute;left:340px;top:1028px;width:79.9px;text-align:right;color:#6e7681">26</div>
<div style="position:absolute;left:472.0px;top:1028px"><span style="color:#cccccc">     </span><span style="color:#808080">&lt;</span><span style="color:#4f98d7">queries</span><span style="color:#808080">&gt;</span></div>
<div style="position:absolute;left:340px;top:1064px;width:79.9px;text-align:right;color:#6e7681">27</div>
<div style="position:absolute;left:472.0px;top:1064px"><span style="color:#cccccc">        </span><span style="color:#808080">&lt;</span><span style="color:#4f98d7">intent</span><span style="color:#808080">&gt;</span></div>
<div style="position:absolute;left:340px;top:1100px;width:79.9px;text-align:right;color:#6e7681">28</div>
<div style="position:absolute;left:472.0px;top:1100px"><span style="color:#cccccc">            </span><span style="color:#808080">&lt;</span><span style="color:#4f98d7">action</span><span style="color:#cccccc"> </span><span style="color:#9adbfe">android:name</span><span style="color:#cccccc">=</span><span style="color:#cb8b71">&quot;android.intent.action.VIEW&quot;</span><span style="color:#cccccc"> </span><span style="color:#808080">/&gt;</span></div>
<div style="position:absolute;left:340px;top:1136px;width:79.9px;text-align:right;color:#6e7681">29</div>
<div style="position:absolute;left:472.0px;top:1136px"><span style="color:#cccccc">            </span><span style="color:#808080">&lt;</span><span style="color:#4f98d7">data</span><span style="color:#cccccc"> </span><span style="color:#9adbfe">android:scheme</span><span style="color:#cccccc">=</span><span style="color:#cb8b71">&quot;https&quot;</span><span style="color:#cccccc"> </span><span style="color:#808080">/&gt;</span></div>
</div>
<div style="position:absolute;left:506.7px;top:189.3px;width:475.1px;height:60.7px;box-sizing:border-box;border:4.1px solid #ff2200"></div></div></body></html>
